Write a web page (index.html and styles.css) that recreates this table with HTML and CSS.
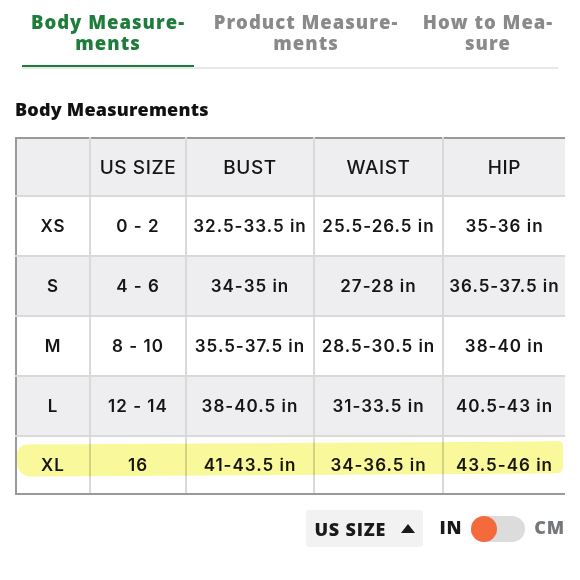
FILE: index.html
```html
<!DOCTYPE html>
<html lang="en">
<head>
<meta charset="utf-8">
<title>Size Guide</title>
<link rel="stylesheet" href="styles.css">
</head>
<body>
<div class="page">
  <nav class="tabs">
    <div class="tab tab-active">Body Measure-<br>ments</div>
    <div class="tab tab-product">Product Measure-<br>ments</div>
    <div class="tab tab-how">How to Mea-<br>sure</div>
  </nav>

  <h2 class="section-title">Body Measurements</h2>

  <div class="table-wrap">
    <table class="size-table">
      <colgroup>
        <col class="c1"><col class="c2"><col class="c3"><col class="c4"><col class="c5">
      </colgroup>
      <thead>
        <tr class="head-row"><th></th><th>US SIZE</th><th>BUST</th><th>WAIST</th><th>HIP</th></tr>
      </thead>
      <tbody>
        <tr class="row-white"><td>XS</td><td>0 - 2</td><td>32.5-33.5 in</td><td>25.5-26.5 in</td><td>35-36 in</td></tr>
        <tr class="row-gray"><td>S</td><td>4 - 6</td><td>34-35 in</td><td>27-28 in</td><td>36.5-37.5 in</td></tr>
        <tr class="row-white"><td>M</td><td>8 - 10</td><td>35.5-37.5 in</td><td>28.5-30.5 in</td><td>38-40 in</td></tr>
        <tr class="row-gray"><td>L</td><td>12 - 14</td><td>38-40.5 in</td><td>31-33.5 in</td><td>40.5-43 in</td></tr>
        <tr class="row-white row-last"><td>XL</td><td>16</td><td>41-43.5 in</td><td>34-36.5 in</td><td>43.5-46 in</td></tr>
      </tbody>
    </table>
    <span class="highlight"></span>
  </div>

  <div class="controls">
    <button class="sort-btn" type="button">US SIZE <span class="tri"></span></button>
    <span class="unit unit-in">IN</span>
    <span class="toggle"><span class="knob"></span></span>
    <span class="unit unit-cm">CM</span>
  </div>
</div>
</body>
</html>
```

FILE: styles.css
```css
html, body {
  margin: 0;
  padding: 0;
  background: #ffffff;
}

.page {
  width: 580px;
  height: 580px;
  overflow: hidden;
  font-family: "Open Sans", "Liberation Sans", sans-serif;
}

.tabs {
  display: flex;
  margin-left: 22px;
  width: 536px;
  border-bottom: 2px solid #e8e8e8;
}

.tab {
  box-sizing: border-box;
  padding: 11px 0 12px;
  text-align: center;
  font-size: 18.5px;
  line-height: 21px;
  font-weight: 800;
  letter-spacing: 1px;
  color: #8a8a8a;
}

.tab-active {
  width: 172px;
  color: #1f7d3b;
  border-bottom: 2px solid #1f7d3b;
}

.tab-product { width: 224px; padding-bottom: 14px; }
.tab-how { width: 140px; padding-bottom: 14px; }

.section-title {
  margin: 30px 0 17px 15px;
  font-size: 18px;
  line-height: 21px;
  font-weight: 800;
  letter-spacing: 0.2px;
  color: #111111;
}

.table-wrap {
  position: relative;
  margin-left: 15px;
  width: 549px;
}

.size-table {
  width: 549px;
  table-layout: fixed;
  border-collapse: collapse;
  font-family: Inter, "Liberation Sans", sans-serif;
  color: #151515;
}

.c1 { width: 74px; }
.c2 { width: 96px; }
.c3 { width: 128px; }
.c4 { width: 129px; }
.c5 { width: 122px; }

.size-table th,
.size-table td {
  padding: 0;
  text-align: center;
  border: 2px solid #d9d9d9;
  white-space: nowrap;
}

.size-table th {
  height: 56px;
  font-size: 19px;
  font-weight: 500;
  letter-spacing: 0.6px;
  background: #eeeef0;
  border-top-color: #9a9a9a;
}

.size-table td {
  height: 58px;
  font-size: 17px;
  font-weight: 600;
  letter-spacing: 1px;
}

.size-table th:first-child,
.size-table td:first-child {
  border-left-color: #9a9a9a;
}

.size-table th:last-child,
.size-table td:last-child {
  border-right: none;
}

.row-gray td { background: #eeeef0; }
.row-white td { background: #ffffff; }

.row-last td {
  height: 56px;
  border-bottom-color: #9a9a9a;
}

.highlight {
  position: absolute;
  left: 2px;
  top: 306px;
  width: 546px;
  height: 32px;
  background: #f9f89a;
  mix-blend-mode: multiply;
  border-radius: 10px 4px 6px 14px;
  transform: rotate(-0.35deg);
}

.controls {
  display: flex;
  align-items: center;
  justify-content: flex-end;
  margin-top: 15px;
  padding-right: 15px;
}

.sort-btn {
  display: flex;
  align-items: center;
  justify-content: space-between;
  box-sizing: border-box;
  width: 117px;
  height: 37px;
  padding: 0 8px 0 8px;
  border: none;
  border-radius: 3px;
  background: #f2f2f2;
  font-family: "Open Sans", "Liberation Sans", sans-serif;
  font-size: 18px;
  font-weight: 800;
  letter-spacing: 0.8px;
  color: #1a1a1a;
}

.tri {
  width: 0;
  height: 0;
  border-left: 7.5px solid transparent;
  border-right: 7.5px solid transparent;
  border-bottom: 9px solid #1a1a1a;
}

.unit {
  font-size: 18px;
  font-weight: 800;
  letter-spacing: 0.8px;
}

.unit-in {
  margin-left: 16px;
  margin-top: -3px;
  color: #1a1a1a;
}

.unit-cm {
  margin-left: 9px;
  margin-top: -3px;
  color: #74777c;
}

.toggle {
  position: relative;
  display: block;
  margin-left: 9px;
  width: 54px;
  height: 26px;
  border-radius: 13px;
  background: #dcdcdc;
}

.knob {
  position: absolute;
  left: 0;
  top: 0;
  width: 26px;
  height: 26px;
  border-radius: 50%;
  background: #f56a3a;
}
```
